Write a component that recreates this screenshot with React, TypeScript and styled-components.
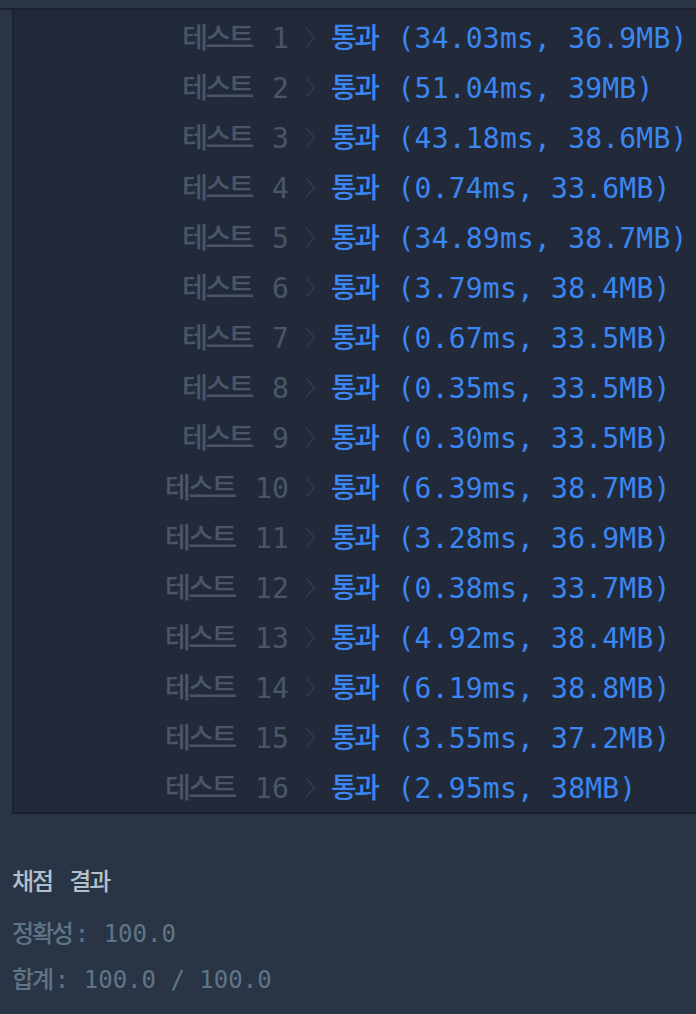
import * as React from 'react';
import styled, { createGlobalStyle } from 'styled-components';

const Colors = {
  page: '#293545',
  panel: '#222a3a',
  rule: '#1b222e',
  label: '#4a5668',
  chevron: '#323c4b',
  pass: '#3b86f0',
  title: '#b3c0cc',
  stat: '#5f7587',
};

const results: [string, string][] = [
  ['34.03ms', '36.9MB'],
  ['51.04ms', '39MB'],
  ['43.18ms', '38.6MB'],
  ['0.74ms', '33.6MB'],
  ['34.89ms', '38.7MB'],
  ['3.79ms', '38.4MB'],
  ['0.67ms', '33.5MB'],
  ['0.35ms', '33.5MB'],
  ['0.30ms', '33.5MB'],
  ['6.39ms', '38.7MB'],
  ['3.28ms', '36.9MB'],
  ['0.38ms', '33.7MB'],
  ['4.92ms', '38.4MB'],
  ['6.19ms', '38.8MB'],
  ['3.55ms', '37.2MB'],
  ['2.95ms', '38MB'],
];

const App = () => {
  return (
    <>
      <GlobalStyle />
      <Page>
        <TopRule />
        <Console>
          {results.map(([time, memory], i) => (
            <Row key={i}>
              <Label>
                <Hangul>테스트</Hangul> {i + 1}
              </Label>
              <Chevron>
                <svg width="11" height="21" viewBox="0 0 11 21">
                  <polyline
                    points="1,1 9.5,10.5 1,20"
                    fill="none"
                    stroke={Colors.chevron}
                    strokeWidth="1.5"
                  />
                </svg>
              </Chevron>
              <Result>
                <Hangul>통과</Hangul> ({time}, {memory})
              </Result>
            </Row>
          ))}
        </Console>
        <Summary>
          <SummaryTitle>
            <Hangul>채점</Hangul> <Hangul>결과</Hangul>
          </SummaryTitle>
          <SummaryLine>
            <Hangul>정확성</Hangul>: 100.0
          </SummaryLine>
          <SummaryLine>
            <Hangul>합계</Hangul>: 100.0 / 100.0
          </SummaryLine>
        </Summary>
      </Page>
    </>
  );
};

const GlobalStyle = createGlobalStyle`
  html, body {
    margin: 0;
    padding: 0;
    background: ${Colors.page};
    overflow: hidden;
  }
  body {
    font-family: "DejaVu Sans Mono", "Noto Sans CJK KR", monospace;
  }
`;

const Page = styled.div`
  width: 100%;
  min-height: 1014px;
  white-space: nowrap;
`;

const TopRule = styled.div`
  margin-top: 8px;
  height: 2px;
  background: ${Colors.rule};
`;

const Console = styled.div`
  margin-left: 12px;
  padding-top: 2px;
  background: ${Colors.panel};
  border-left: 2px solid ${Colors.rule};
  border-bottom: 2px solid ${Colors.rule};
`;

const Row = styled.div`
  display: grid;
  grid-template-columns: 275px 42px 1fr;
  align-items: center;
  height: 50px;
  font-size: 28px;
  line-height: 1;
  letter-spacing: 0.2px;
`;

const Hangul = styled.span`
  font-family: "Noto Sans CJK KR", sans-serif;
  font-weight: 500;
  letter-spacing: -0.09em;
  margin-right: 3px;
`;

const Label = styled.div`
  text-align: right;
  color: ${Colors.label};
`;

const Chevron = styled.div`
  display: flex;
  justify-content: center;
  align-items: center;
`;

const Result = styled.div`
  color: ${Colors.pass};
`;

const Summary = styled.div`
  padding: 50px 12px 0;
  font-size: 24px;
  line-height: 32px;
`;

const SummaryTitle = styled.div`
  color: ${Colors.title};
  margin-bottom: 18px;
`;

const SummaryLine = styled.div`
  color: ${Colors.stat};
  margin-bottom: 12px;
`;

export default App;
